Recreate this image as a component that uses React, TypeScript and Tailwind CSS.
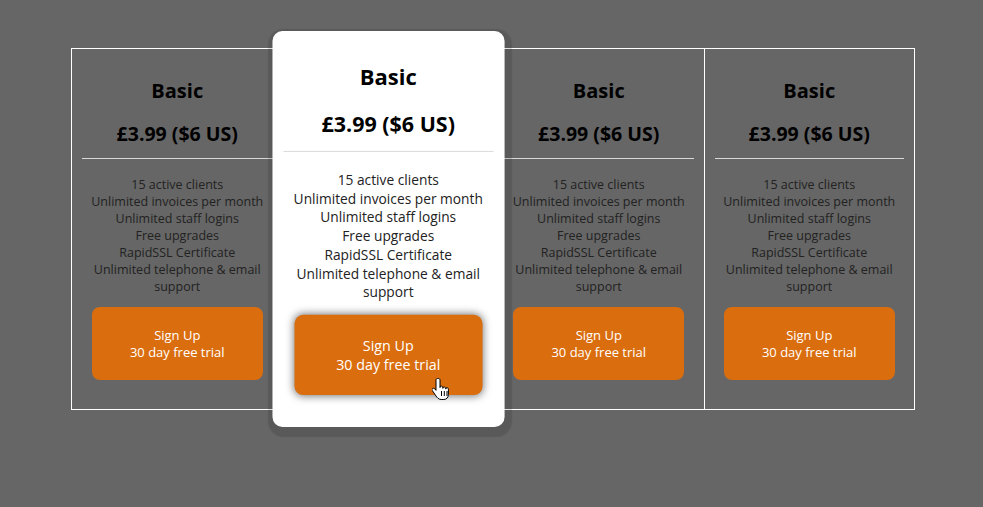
const features = [
  "15 active clients",
  "Unlimited invoices per month",
  "Unlimited staff logins",
  "Free upgrades",
  "RapidSSL Certificate",
  "Unlimited telephone & email support",
];

function HandCursor() {
  return (
    <svg
      width="18"
      height="24"
      viewBox="0 0 18 24"
      className="absolute left-[432px] top-[377px] z-20"
    >
      <path
        d="M5.5 1.5c-.9 0-1.5.7-1.5 1.6v10.2l-1.2-1.4c-.7-.8-1.8-.9-2.4-.2-.5.5-.5 1.3 0 2l3.6 5.3c1 1.5 2.6 3.5 5.2 3.5h2.6c2.8 0 4.6-2.2 4.6-5v-5.3c0-.9-.6-1.5-1.4-1.5-.8 0-1.4.6-1.4 1.4v-.6c0-.9-.6-1.5-1.4-1.5-.8 0-1.4.6-1.4 1.4v-.8c0-.9-.6-1.5-1.4-1.5-.8 0-1.4.6-1.4 1.5V3.1c0-.9-.6-1.6-1.5-1.6z"
        fill="#fff"
        stroke="#000"
        strokeWidth="1"
        strokeLinejoin="round"
      />
      <path d="M9.5 14v5M12.3 14v5M15 14v5" stroke="#000" strokeWidth="1" />
    </svg>
  );
}

function PlanColumn({ featured, bordered }: { featured?: boolean; bordered?: boolean }) {
  return (
    <div
      className={`flex h-[360px] w-[210.5px] shrink-0 flex-col items-center px-[10px] pt-[29px] ${
        featured
          ? "relative z-10 scale-[1.1] rounded-[9px] bg-white shadow-[1px_4px_1px_5px_rgba(0,0,0,0.12)]"
          : ""
      } ${bordered ? "border-l border-white" : ""}`}
    >
      <h3 className="text-[20px] leading-[26px] font-bold text-black">Basic</h3>
      <p className="mt-[17px] text-[19.5px] leading-[26px] font-bold text-black">
        £3.99 ($6 US)
      </p>
      <div className={`mt-[11px] h-px w-full ${featured ? "bg-[#ddd]" : "bg-[#d8d8d8]"}`} />
      <ul className="mt-[17px] text-center text-[12.5px] leading-[17px] text-[#222]">
        {features.map((f) => (
          <li key={f}>{f}</li>
        ))}
      </ul>
      <button
        className={`mt-[12px] flex h-[73px] w-[171px] flex-col items-center justify-center rounded-[8px] bg-[#da6d0e] text-[13px] leading-[17px] text-white ${
          featured ? "shadow-[0_0_8px_rgba(0,0,0,0.55)]" : ""
        }`}
      >
        <span>Sign Up</span>
        <span>30 day free trial</span>
      </button>
    </div>
  );
}

export default function App() {
  return (
    <div
      className="relative h-[507px] w-full overflow-hidden bg-[#666666] pt-[48px]"
      style={{ fontFamily: '"Open Sans", "Noto Sans", sans-serif' }}
    >
      <div className="ml-[71px] flex w-[844px] border border-white">
        <PlanColumn />
        <PlanColumn featured />
        <PlanColumn bordered />
        <PlanColumn bordered />
      </div>
      <HandCursor />
    </div>
  );
}
